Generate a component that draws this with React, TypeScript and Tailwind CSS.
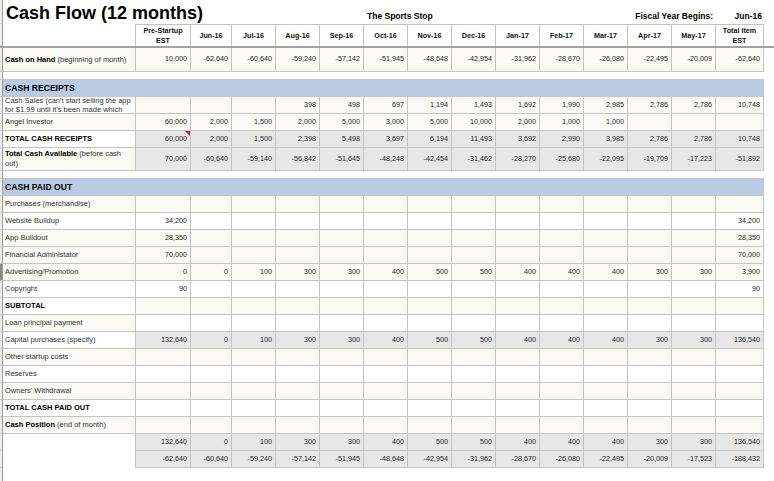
import type { ReactNode } from 'react';

const colW = [
  'w-[55px]',
  'w-[41px]',
  'w-[44px]',
  'w-[44px]',
  'w-[44px]',
  'w-[44px]',
  'w-[44px]',
  'w-[44px]',
  'w-[44px]',
  'w-[44px]',
  'w-[44px]',
  'w-[44px]',
  'w-[44px]',
  'w-[48px]',
];

const headers: ReactNode[] = [
  <>Pre-Startup<br />EST</>,
  'Jun-16',
  'Jul-16',
  'Aug-16',
  'Sep-16',
  'Oct-16',
  'Nov-16',
  'Dec-16',
  'Jan-17',
  'Feb-17',
  'Mar-17',
  'Apr-17',
  'May-17',
  <>Total Item<br />EST</>,
];

const CREAM = 'bg-[#faf9f3]';
const WHITE = 'bg-white';
const GRAY = 'bg-[#e7e7e7]';

const empty = Array(14).fill('');
const spend = ['0', '100', '300', '300', '400', '500', '500', '400', '400', '400', '300', '300'];

type Row = {
  label?: ReactNode;
  values: string[];
  h: string;
  labelBg: string;
  valBg: string;
  wrap?: 'top' | 'center';
  open?: boolean;
  note?: boolean;
  dark?: boolean;
};

const receipts: Row[] = [
  {
    label: (
      <>
        Cash Sales (can't start selling the app
        <br />
        for $1.99 until it's been made which
      </>
    ),
    values: ['', '', '', '398', '498', '697', '1,194', '1,493', '1,692', '1,990', '2,985', '2,786', '2,786', '10,748'],
    h: 'h-[17px]',
    labelBg: WHITE,
    valBg: CREAM,
    wrap: 'top',
  },
  {
    label: 'Angel Investor',
    values: ['60,000', '2,000', '1,500', '2,000', '5,000', '3,000', '5,000', '10,000', '2,000', '1,000', '1,000', '', '', ''],
    h: 'h-[17px]',
    labelBg: CREAM,
    valBg: CREAM,
  },
  {
    label: <span className="font-bold text-black">TOTAL CASH RECEIPTS</span>,
    values: ['60,000', '2,000', '1,500', '2,398', '5,498', '3,697', '6,194', '11,493', '3,692', '2,990', '3,985', '2,786', '2,786', '10,748'],
    h: 'h-[17px]',
    labelBg: WHITE,
    valBg: GRAY,
    note: true,
  },
  {
    label: (
      <>
        <span className="font-bold text-black">Total Cash Available</span> (before cash
        <br />
        out)
      </>
    ),
    values: ['70,000', '-60,640', '-59,140', '-56,842', '-51,645', '-48,248', '-42,454', '-31,462', '-28,270', '-25,680', '-22,095', '-19,709', '-17,223', '-51,892'],
    h: 'h-[23px]',
    labelBg: CREAM,
    valBg: GRAY,
    wrap: 'center',
  },
];

const paidOut: Row[] = [
  { label: 'Purchases (merchandise)', values: empty, h: 'h-[17px]', labelBg: CREAM, valBg: CREAM },
  { label: 'Website Buildup', values: ['34,200', ...Array(12).fill(''), '34,200'], h: 'h-[17px]', labelBg: WHITE, valBg: WHITE },
  { label: 'App Buildout', values: ['28,350', ...Array(12).fill(''), '28,350'], h: 'h-[17px]', labelBg: CREAM, valBg: CREAM },
  { label: 'Financial Administator', values: ['70,000', ...Array(12).fill(''), '70,000'], h: 'h-[17px]', labelBg: CREAM, valBg: CREAM },
  { label: 'Advertising/Promotion', values: ['0', ...spend, '3,900'], h: 'h-[17px]', labelBg: CREAM, valBg: CREAM, dark: true },
  { label: 'Copyright', values: ['90', ...Array(12).fill(''), '90'], h: 'h-[17px]', labelBg: WHITE, valBg: WHITE },
  { label: <span className="font-bold text-black">SUBTOTAL</span>, values: empty, h: 'h-[17px]', labelBg: WHITE, valBg: CREAM },
  { label: 'Loan principal payment', values: empty, h: 'h-[17px]', labelBg: CREAM, valBg: WHITE },
  { label: 'Capital purchases (specify)', values: ['132,640', ...spend, '136,540'], h: 'h-[17px]', labelBg: WHITE, valBg: GRAY },
  { label: 'Other startup costs', values: empty, h: 'h-[17px]', labelBg: CREAM, valBg: CREAM },
  { label: 'Reserves', values: empty, h: 'h-[17px]', labelBg: WHITE, valBg: WHITE },
  { label: "Owners' Withdrawal", values: empty, h: 'h-[17px]', labelBg: CREAM, valBg: CREAM },
  { label: <span className="font-bold text-black">TOTAL CASH PAID OUT</span>, values: empty, h: 'h-[17px]', labelBg: WHITE, valBg: WHITE },
  {
    label: (
      <span>
        <span className="font-bold text-black">Cash Position</span> (end of month)
      </span>
    ),
    values: empty,
    h: 'h-[17px]',
    labelBg: CREAM,
    valBg: CREAM,
  },
  { values: ['132,640', ...spend, '136,540'], h: 'h-[17px]', labelBg: WHITE, valBg: GRAY, open: true },
  {
    values: ['-62,640', '-60,640', '-59,240', '-57,142', '-51,945', '-48,648', '-42,954', '-31,962', '-28,670', '-26,080', '-22,495', '-20,009', '-17,523', '-188,432'],
    h: 'h-[17px]',
    labelBg: WHITE,
    valBg: GRAY,
    open: true,
  },
];

function Strip({ dark }: { dark?: boolean }) {
  return (
    <div
      className={`w-[3px] shrink-0 self-stretch border-r border-b border-r-[#9c9c9c] border-b-[#c6c6c6] ${
        dark ? 'bg-[#8a8a8a]' : 'bg-[#ececec]'
      }`}
    />
  );
}

function DataRow({ row }: { row: Row }) {
  const labelAlign =
    row.wrap === 'top' ? 'items-start leading-[8.5px]' : row.wrap === 'center' ? 'items-center leading-[10.5px]' : 'items-center leading-none';
  return (
    <div className={`flex ${row.h}`}>
      <Strip dark={row.dark} />
      <div
        className={`w-[133px] shrink-0 border-r border-[#c4c4c4] ${row.open ? '' : 'border-b'} ${row.labelBg} flex ${labelAlign} overflow-hidden px-[2px] text-[7.5px] whitespace-nowrap text-[#333]`}
      >
        <div>{row.label}</div>
      </div>
      {row.values.map((v, i) => (
        <div
          key={i}
          className={`${colW[i]} relative shrink-0 border-r border-b border-[#c4c4c4] ${row.valBg} flex items-center justify-end pr-[3px] text-[#222]`}
        >
          {v}
          {row.note && i === 0 && (
            <span className="absolute top-0 right-0 h-0 w-0 border-t-[5px] border-l-[5px] border-t-[#e01010] border-l-transparent" />
          )}
        </div>
      ))}
    </div>
  );
}

function Band({ title }: { title: string }) {
  return (
    <div className="flex h-[17px]">
      <Strip />
      <div className="flex w-[761px] items-center border-r border-b border-[#c4c4c4] bg-[#b9cbe3] px-[2px] text-[8.6px] font-bold text-black">
        {title}
      </div>
    </div>
  );
}

function Gap() {
  return (
    <div className="flex h-[8px]">
      <Strip />
      <div className="w-[761px] border-b border-[#c4c4c4] bg-white" />
    </div>
  );
}

export default function App() {
  return (
    <div className="h-[481px] w-[774px] overflow-hidden bg-white font-['Liberation_Sans',Arial,sans-serif] text-[7.2px]">
      {/* title row */}
      <div className="flex h-[24px]">
        <Strip />
        <div className="flex items-baseline pt-[4px] text-black">
          <div className="w-[361px] shrink-0 pl-[3px] text-[18px] leading-none font-bold">Cash Flow (12 months)</div>
          <div className="w-[44px] shrink-0 whitespace-nowrap pl-[3px] text-[8.5px] leading-none font-bold">The Sports Stop</div>
          <div className="w-[308px] shrink-0 pr-[3px] text-right text-[8.5px] leading-none font-bold">Fiscal Year Begins:</div>
          <div className="w-[48px] shrink-0 pr-[2px] text-right text-[8.5px] leading-none font-bold">Jun-16</div>
        </div>
      </div>

      {/* column headers */}
      <div className="flex h-[24px] border-b-2 border-b-[#a2a2a2]">
        <Strip />
        <div className="w-[133px] shrink-0 border-r border-[#c4c4c4] bg-white" />
        {headers.map((h, i) => (
          <div
            key={i}
            className={`${colW[i]} flex shrink-0 items-center justify-center border-t border-r border-[#c4c4c4] bg-white text-center leading-[9.3px] font-bold text-[#111]`}
          >
            <div>{h}</div>
          </div>
        ))}
      </div>

      <DataRow
        row={{
          label: (
            <span>
              <span className="font-bold text-black">Cash on Hand</span> (beginning of month)
            </span>
          ),
          values: ['10,000', '-62,640', '-60,640', '-59,240', '-57,142', '-51,945', '-48,648', '-42,954', '-31,962', '-28,670', '-26,080', '-22,495', '-20,009', '-62,640'],
          h: 'h-[24px]',
          labelBg: CREAM,
          valBg: CREAM,
        }}
      />

      <Gap />
      <Band title="CASH RECEIPTS" />
      {receipts.map((r, i) => (
        <DataRow key={i} row={r} />
      ))}

      <Gap />
      <Band title="CASH PAID OUT" />
      {paidOut.map((r, i) => (
        <DataRow key={i} row={r} />
      ))}

      <div className="flex h-[17px]">
        <Strip />
      </div>
    </div>
  );
}
